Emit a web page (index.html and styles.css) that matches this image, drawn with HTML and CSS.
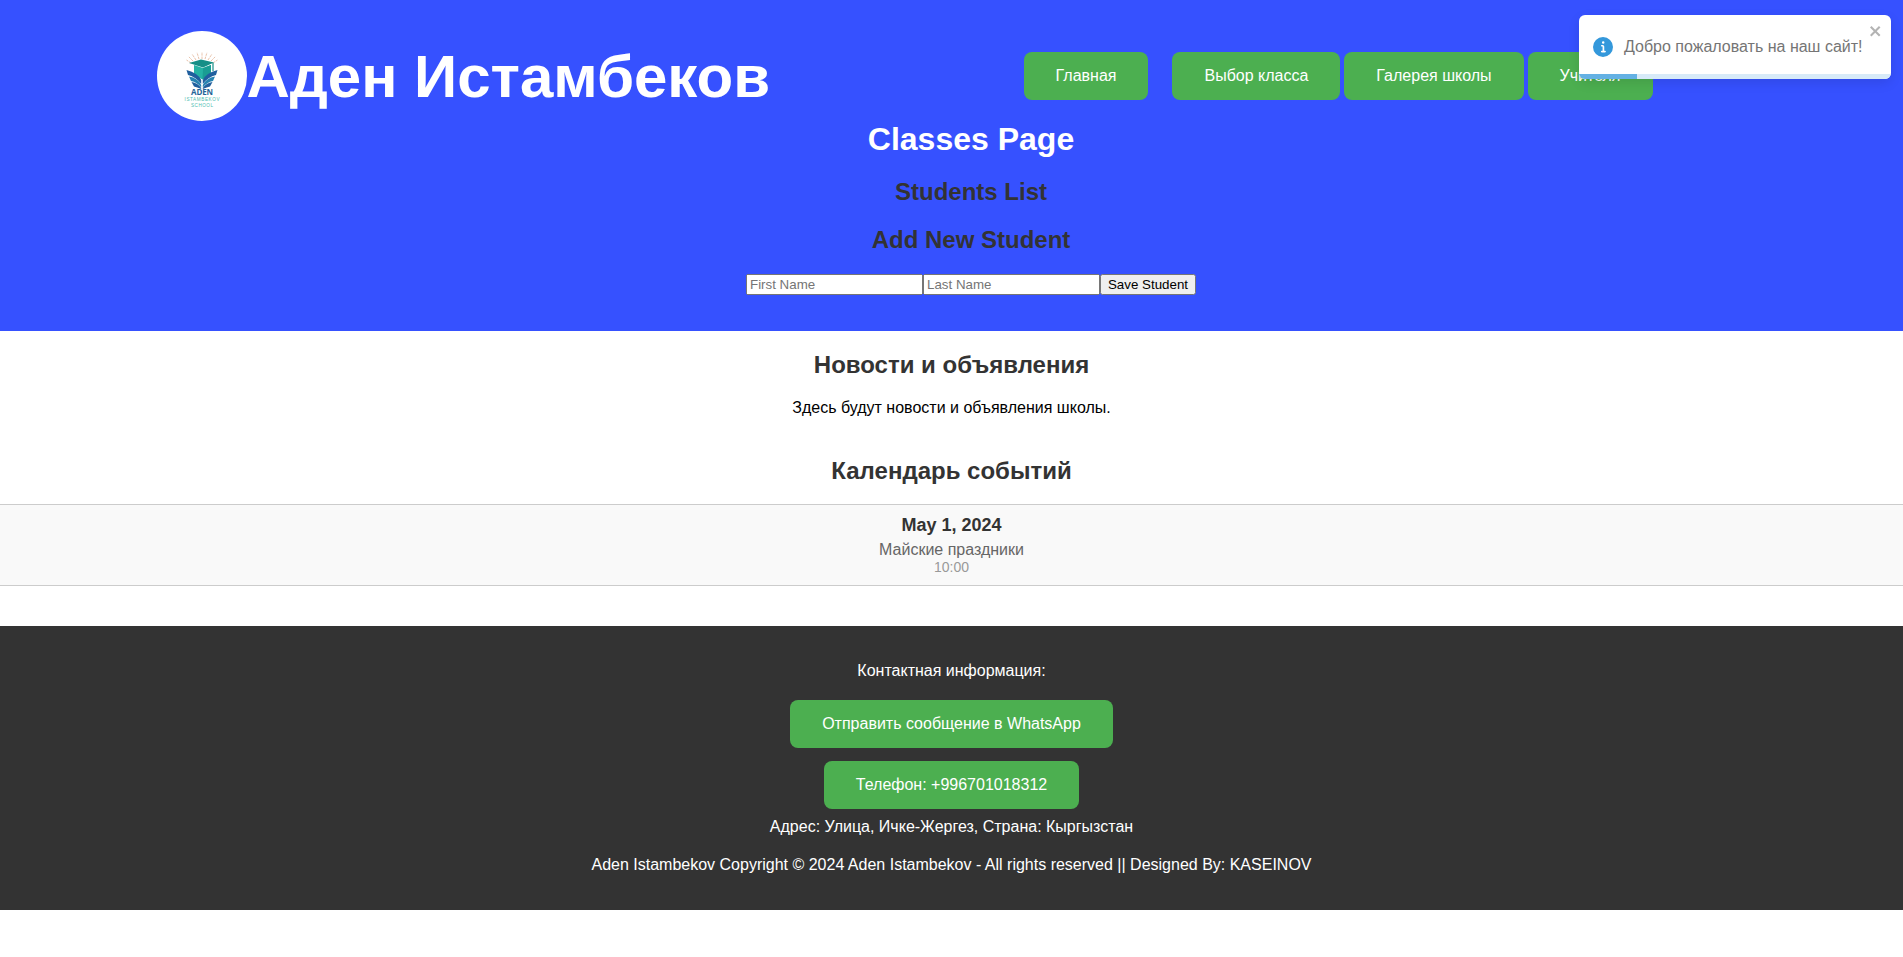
FILE: index.html
```html
<!DOCTYPE html>
<html lang="ru">
<head>
<meta charset="utf-8">
<title>Аден Истамбеков</title>
<link rel="stylesheet" href="styles.css">
</head>
<body>
<header class="header">
  <div class="topbar">
    <div class="brand">
      <svg class="logo" viewBox="0 0 90 90" width="90" height="90">
        <circle cx="45" cy="45" r="45" fill="#fff"/>
        <path d="M45 28V21M42 28L40 21.500M48 28L50 21.500M39 29L35 23M51 29L55 23M36 30L31.500 25.500M54 30L58.500 25.500M34 32L29.500 29M56 32L60.500 29" fill="none" stroke="#e9c3ac" stroke-width="1" stroke-dasharray="2.500 0.800"/>
        <path d="M37 34L46 37L54 34V44L45.500 48.500L37 44Z" fill="#25b3a4"/>
        <path d="M46 37L54 34V44L45.500 48.500Z" fill="#1a9d93"/>
        <path d="M32 32L44 28.500L57 31.500L46 36.500Z" fill="#168f87"/>
        <path d="M56 32V40" stroke="#168f87" stroke-width="1.200"/>
        <path d="M29.500 39Q41 42 44.200 49V53Q39 46 31 44Z M60.500 39Q49 42 45.800 49V53Q51 46 59 44Z" fill="#205f9e"/>
        <path d="M32 45.500Q41 47 44.200 54V56.500Q40 51 34 50Z M58 45.500Q49 47 45.800 54V56.500Q50 51 56 50Z" fill="#2683b1"/>
        <path d="M34.500 51Q41 52 44.200 57V58Q40 56 37 55.500Z M55.500 51Q49 52 45.800 57V58Q50 56 53 55.500Z" fill="#205f9e"/>
        <text class="logo-name" x="45" y="64" textLength="22">ADEN</text>
        <text class="logo-sub" x="45" y="70" textLength="35">ISTAMBEKOV</text>
        <text class="logo-sub" x="45" y="75.500" textLength="22">SCHOOL</text>
      </svg>
      <h1 class="brand-title">Аден Истамбеков</h1>
    </div>
    <nav class="nav">
      <a class="button nav-home">Главная</a>
      <a class="button">Выбор класса</a>
      <a class="button">Галерея школы</a>
      <a class="button">Учителя</a>
    </nav>
  </div>
  <div class="classes">
    <h1 class="page-title">Classes Page</h1>
    <h2 class="heading">Students List</h2>
    <h2 class="heading">Add New Student</h2>
    <form class="student-form">
      <input class="field" type="text" placeholder="First Name">
      <input class="field" type="text" placeholder="Last Name">
      <button class="save" type="button">Save Student</button>
    </form>
  </div>
</header>
<section class="news">
  <h2 class="heading">Новости и объявления</h2>
  <p class="news-text">Здесь будут новости и объявления школы.</p>
</section>
<section class="calendar">
  <h2 class="heading">Календарь событий</h2>
  <div class="event">
    <div class="event-date">May 1, 2024</div>
    <div class="event-name">Майские праздники</div>
    <div class="event-time">10:00</div>
  </div>
</section>
<footer class="footer">
  <p class="footer-text">Контактная информация:</p>
  <a class="button contact">Отправить сообщение в WhatsApp</a>
  <a class="button contact">Телефон: +996701018312</a>
  <p class="footer-text address">Адрес: Улица, Ичке-Жергез, Страна: Кыргызстан</p>
  <p class="footer-text">Aden Istambekov Copyright © 2024 Aden Istambekov - All rights reserved || Designed By: KASEINOV</p>
</footer>
<div class="toast">
  <svg class="toast-icon" viewBox="0 0 24 24" width="20" height="20"><path fill="#3498db" d="M12 0a12 12 0 1012 12A12.013 12.013 0 0012 0zm.25 5a1.500 1.500 0 11-1.500 1.500 1.500 1.500 0 011.500-1.500zm2.250 13.500h-4a1 1 0 010-2h.75a.25.25 0 00.25-.25v-4.500a.25.25 0 00-.25-.25h-.75a1 1 0 010-2h1a2 2 0 012 2v4.750a.25.25 0 00.25.25h.75a1 1 0 110 2z"/></svg>
  <span class="toast-text">Добро пожаловать на наш сайт!</span>
  <svg class="toast-close" viewBox="0 0 14 16" width="14" height="16"><path fill-rule="evenodd" d="M7.710 8.230l3.750 3.750-1.480 1.480-3.750-3.750-3.750 3.750L1 11.980l3.750-3.750L1 4.480 2.480 3l3.750 3.750L9.980 3l1.480 1.480-3.750 3.750z"/></svg>
  <div class="toast-track"><div class="toast-bar"></div></div>
</div>
</body>
</html>
```
FILE: styles.css
```css
body {
  margin: 0;
  font-family: "Liberation Sans", Arial, sans-serif;
  font-size: 16px;
  line-height: 18px;
  color: #000;
  background: #fff;
}
.header {
  box-sizing: border-box;
  height: 331px;
  padding-top: 31px;
  background: #3651ff;
}
.topbar {
  display: flex;
  justify-content: space-between;
  align-items: center;
  height: 90px;
  padding: 0 250.5px 0 157.4px;
}
.brand {
  display: flex;
  align-items: center;
}
.logo {
  display: block;
}
.logo-name {
  font-family: "Open Sans", "Liberation Sans", sans-serif;
  font-size: 8px;
  font-weight: bold;
  fill: #1f6598;
  text-anchor: middle;
}
.logo-sub {
  font-size: 4.6px;
  fill: #4dbcb0;
  text-anchor: middle;
}
.brand-title {
  margin: 2px 0 0 -1px;
  font-size: 60px;
  line-height: 68px;
  color: #fff;
  white-space: nowrap;
}
.nav {
  display: flex;
  gap: 4px;
}
.nav-home {
  margin-right: 20px;
}
.button {
  display: block;
  padding: 15px 32px;
  border-radius: 8px;
  background: #4caf50;
  color: #fff;
  white-space: nowrap;
}
.classes {
  padding-left: 39px;
  text-align: center;
}
.page-title {
  margin: 0 0 20px;
  font-size: 32px;
  line-height: 37px;
  color: #fff;
}
.heading {
  margin: 0 0 20px;
  font-size: 24px;
  line-height: 28px;
  color: #333;
}
.student-form {
  display: flex;
  justify-content: center;
}
.field {
  box-sizing: border-box;
  width: 177px;
  height: 21px;
  margin: 0;
  font: 13.333px "Liberation Sans", Arial, sans-serif;
}
.save {
  height: 21px;
  margin: 0;
  font: 13.333px "Liberation Sans", Arial, sans-serif;
}
.news {
  padding-top: 20px;
  text-align: center;
}
.news-text {
  margin: 0;
}
.calendar {
  padding: 40px 0;
  text-align: center;
}
.calendar .heading {
  margin-bottom: 19px;
}
.event {
  padding: 10px;
  border: solid #ccc;
  border-width: 1px 0;
  background: #f9f9f9;
}
.event-date {
  margin-bottom: 5px;
  font-size: 18px;
  font-weight: bold;
  line-height: 21px;
  color: #333;
}
.event-name {
  color: #666;
}
.event-time {
  font-size: 14px;
  line-height: 16px;
  color: #999;
}
.footer {
  display: flex;
  flex-direction: column;
  align-items: center;
  padding: 36px 20px;
  background: #333;
  color: #fff;
}
.footer-text {
  margin: 0;
}
.contact {
  margin-top: 20px;
}
.contact + .contact {
  margin-top: 13px;
}
.address {
  margin: 9px 0 20px;
}
.toast {
  position: absolute;
  top: 15px;
  right: 12px;
  box-sizing: border-box;
  display: flex;
  align-items: center;
  width: 312px;
  height: 64px;
  padding: 0 14px;
  border-radius: 6px;
  background: #fff;
  box-shadow: 0 4px 12px rgba(0, 0, 0, 0.1);
  color: #757575;
  overflow: hidden;
}
.toast-icon {
  margin-right: 11px;
}
.toast-text {
  white-space: nowrap;
}
.toast-close {
  position: absolute;
  top: 8px;
  right: 8px;
  fill: #b3b3b3;
}
.toast-track {
  position: absolute;
  left: 0;
  right: 0;
  bottom: 0;
  height: 5px;
  background: #d7eaf8;
}
.toast-bar {
  width: 58px;
  height: 5px;
  background: #64b1e4;
}
```
